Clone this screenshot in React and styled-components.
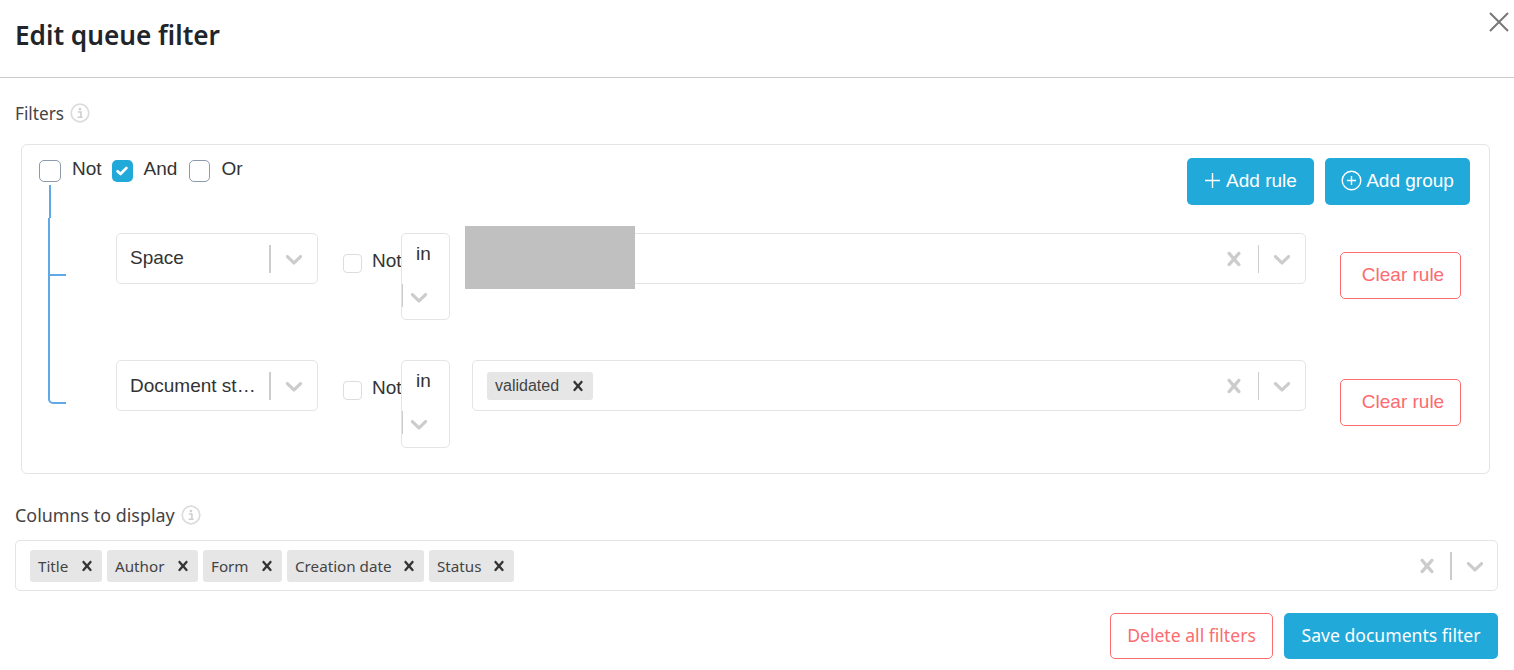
import React from "react";
import styled, { createGlobalStyle } from "styled-components";

const Global = createGlobalStyle`
  html, body { margin: 0; padding: 0; background: #fff; overflow: hidden; }
  * { box-sizing: border-box; }
`;
const BLUE = "#21a9da";
const RED = "#fb6b6f";
const UI = `"Noto Sans", "Open Sans", sans-serif`;
const ARIAL = `"Liberation Sans", Arial, sans-serif`;

const Dialog = styled.div`
  width: 1514px;
  height: 670px;
  background: #fff;
  font-family: ${UI};
  color: #333;
`;
const Header = styled.header`
  position: relative;
  height: 78px;
  padding: 0 15px 8px;
  display: flex;
  align-items: center;
  border-bottom: 1px solid #ccc;
`;
const Title = styled.h1`
  margin: 0;
  font-size: 26.2px;
  font-weight: 600;
  line-height: 32px;
  color: #212529;
`;
const Close = styled.button`
  position: absolute;
  top: 12px;
  right: 5px;
  width: 20px;
  height: 20px;
  padding: 0;
  border: 0;
  background: none;
  display: block;
`;
const Body = styled.main`
  padding: 0 16px 0 15px;
`;
const Label = styled.div`
  display: flex;
  align-items: center;
  gap: 6px;
  height: 24px;
  margin-top: ${(p) => p.$top}px;
  margin-bottom: ${(p) => p.$bottom}px;
  font-size: ${(p) => p.$size}px;
  color: #444;
`;
const Panel = styled.section`
  margin: 0 8px 0 6px;
  height: 330px;
  padding: 13px 19px 0 17px;
  border: 1px solid #e4e4e4;
  border-radius: 6px;
  display: grid;
  grid-template-columns: 77px 1fr auto;
  grid-template-rows: 27px 20px auto;
  font-family: ${ARIAL};
  font-size: 19px;
`;
const Conditions = styled.div`
  grid-column: 1 / 3;
  grid-row: 1;
  display: flex;
  align-items: flex-start;
  line-height: 22px;
`;
const GroupCheck = styled.span`
  width: ${(p) => p.$w || 21}px;
  height: 22px;
  margin-top: 2px;
  border-radius: 5px;
  border: ${(p) => (p.$on ? "0" : "1px solid #8c9aab")};
  background: ${(p) => (p.$on ? BLUE : "#fff")};
  display: flex;
  align-items: center;
  justify-content: center;
`;
const GroupText = styled.span`
  margin: 0 ${(p) => p.$after || 10}px 0 11px;
  color: #333;
`;
const Actions = styled.div`
  grid-column: 3;
  grid-row: 1 / 3;
  display: flex;
  gap: 11px;
`;
const Solid = styled.button`
  height: ${(p) => p.$h || 47}px;
  width: ${(p) => p.$w}px;
  border: 0;
  padding: 0 0 ${(p) => p.$lift || 0}px;
  border-radius: 5px;
  background: ${BLUE};
  color: #fff;
  font: inherit;
  display: flex;
  align-items: center;
  justify-content: center;
  gap: ${(p) => p.$gap || 0}px;
`;
const Spine = styled.svg`
  grid-column: 1;
  grid-row: 2 / 4;
  display: block;
`;
const Rules = styled.div`
  grid-column: 2 / 4;
  grid-row: 3;
  padding: 28px 9px 0 0;
  display: flex;
  flex-direction: column;
  gap: 40px;
`;
const Rule = styled.div`
  display: flex;
  align-items: flex-start;
  height: ${(p) => p.$h}px;
`;
const Select = styled.div`
  position: relative;
  display: flex;
  align-items: center;
  height: 51px;
  background: #fff;
  border: 1px solid #e4e4e4;
  border-radius: 5px;
  color: #333;
`;
const FieldSelect = styled(Select)`
  width: 202px;
  flex: none;
  padding-left: 13px;
`;
const FieldText = styled.span`
  flex: 1;
  min-width: 0;
  padding-bottom: ${(p) => p.$lift || 0}px;
  white-space: nowrap;
  overflow: hidden;
  text-overflow: ellipsis;
  margin-right: 10px;
`;
const Sep = styled.span`
  flex: none;
  width: ${(p) => p.$w || 1}px;
  height: 28px;
  background: #ccc;
`;
const Indicator = styled.span`
  flex: none;
  width: ${(p) => p.$w || 47}px;
  display: flex;
  justify-content: center;
  align-items: center;
  svg { display: block; }
`;
const NotBox = styled.span`
  flex: none;
  width: 19px;
  height: 19px;
  margin: 21px 0 0 25px;
  border: 1px solid #ddd;
  border-radius: 4px;
`;
const NotText = styled.span`
  flex: none;
  width: 29px;
  margin: 17px 0 0 10px;
  line-height: 22px;
  color: #333;
  white-space: nowrap;
  overflow: hidden;
`;
const OpSelect = styled.div`
  flex: none;
  width: 49px;
  height: 100%;
  border: 1px solid #e4e4e4;
  border-radius: 5px;
  display: grid;
  grid-template-rows: 50px 1fr;
  color: #333;
`;
const OpText = styled.span`
  padding: 9px 0 0 14px;
  line-height: 22px;
`;
const OpIndicators = styled.div`
  display: flex;
  align-items: flex-start;
  svg { display: block; margin: -1px 0 0 2px; }
`;
const OpSep = styled.span`
  width: 1px;
  height: 23px;
  background: #ccc;
`;
const ValueSelect = styled(Select)`
  flex: 1;
  min-width: 0;
  margin-left: 22px;
  padding-left: 14px;
`;
const Values = styled.div`
  flex: 1;
  display: flex;
  gap: 5px;
`;
const Redacted = styled.div`
  position: absolute;
  left: -8px;
  top: -8px;
  width: 170px;
  height: 63px;
  background: #c0c0c0;
`;
const ClearRule = styled.button`
  flex: none;
  width: 121px;
  height: 47px;
  margin: 19px 0 0 34px;
  padding: 0 0 1px 5px;
  background: #fff;
  border: 1px solid ${RED};
  border-radius: 5px;
  color: ${RED};
  font: inherit;
`;
const Chip = styled.span`
  display: flex;
  align-items: center;
  justify-content: space-between;
  width: ${(p) => p.$w}px;
  height: ${(p) => p.$h}px;
  padding: 0 5px 0 8px;
  background: #e6e6e6;
  border-radius: 3px;
  color: #444;
  font-size: ${(p) => p.$size}px;
  white-space: nowrap;
  svg { display: block; flex: none; }
`;
const ColumnsSelect = styled(Select)`
  padding-left: 14px;
`;
const Footer = styled.footer`
  margin-top: 22px;
  display: flex;
  justify-content: flex-end;
  gap: 11px;
  font-size: 17.6px;
`;
const Outline = styled.button`
  width: 163px;
  height: 46px;
  padding: 0 0 2px;
  background: #fff;
  border: 1px solid ${RED};
  border-radius: 5px;
  color: ${RED};
  font: inherit;
`;

const Chevron = ({ size = 28 }) => (
  <svg width={size} height={size} viewBox="0 0 20 20" fill="#ccc">
    <path d="M4.516 7.548c0.436-0.446 1.043-0.481 1.576 0l3.908 3.747 3.908-3.747c0.533-0.481 1.141-0.446 1.574 0 0.436 0.445 0.408 1.197 0 1.615-0.406 0.418-4.695 4.502-4.695 4.502-0.217 0.223-0.502 0.335-0.787 0.335s-0.57-0.112-0.789-0.335c0 0-4.287-4.084-4.695-4.502s-0.436-1.17 0-1.615z" />
  </svg>
);
const CROSS = "M14.348 14.849c-0.469 0.469-1.229 0.469-1.697 0l-2.651-3.030-2.651 3.029c-0.469 0.469-1.229 0.469-1.697 0-0.469-0.469-0.469-1.229 0-1.697l2.758-3.15-2.759-3.152c-0.469-0.469-0.469-1.228 0-1.697s1.228-0.469 1.697 0l2.652 3.031 2.651-3.031c0.469-0.469 1.228-0.469 1.697 0s0.469 1.229 0 1.697l-2.758 3.152 2.758 3.15c0.469 0.469 0.469 1.229 0 1.698z";
const Cross = ({ size = 28, color = "#ccc" }) => (
  <svg width={size} height={size} viewBox="0 0 20 20" fill={color}>
    <path d={CROSS} />
  </svg>
);
const Info = () => (
  <svg width="20" height="20" viewBox="0 0 20 20" fill="none">
    <circle cx="10" cy="10" r="8.8" stroke="#dcdcdc" strokeWidth="1.7" />
    <circle cx="10" cy="6.1" r="1.3" fill="#cfcfcf" />
    <path d="M7.9 9h3v5.2M7.6 14.3h5" stroke="#cfcfcf" strokeWidth="1.6" />
  </svg>
);
const Check = () => (
  <svg width="12" height="10" viewBox="0 0 12 10" fill="none">
    <path d="M1.6 5.2 4.5 8 10.4 2" stroke="#fff" strokeWidth="2.6" strokeLinecap="round" strokeLinejoin="round" />
  </svg>
);

const RuleRow = ({ h, field, lift, children }) => (
  <Rule $h={h}>
    <FieldSelect>
      <FieldText $lift={lift}>{field}</FieldText>
      <Sep $w={2} />
      <Indicator $w={46}>
        <Chevron />
      </Indicator>
    </FieldSelect>
    <NotBox />
    <NotText>Not</NotText>
    <OpSelect>
      <OpText>in</OpText>
      <OpIndicators>
        <OpSep />
        <Chevron />
      </OpIndicators>
    </OpSelect>
    {children}
    <ClearRule>Clear rule</ClearRule>
  </Rule>
);

const ValueEnd = ({ sep = 1, clear = 48, open = 46 }) => (
  <>
    <Indicator $w={clear}>
      <Cross />
    </Indicator>
    <Sep $w={sep} />
    <Indicator $w={open}>
      <Chevron />
    </Indicator>
  </>
);

const columns = [
  ["Title", 72],
  ["Author", 91],
  ["Form", 79],
  ["Creation date", 137],
  ["Status", 85],
];

export default function App() {
  return (
    <Dialog>
      <Global />
      <Header>
        <Title>Edit queue filter</Title>
        <Close aria-label="Close">
          <svg width="20" height="20" viewBox="0 0 20 20" fill="none">
            <path d="M1 1 19 19M19 1 1 19" stroke="#777" strokeWidth="2" />
          </svg>
        </Close>
      </Header>
      <Body>
        <Label $top={23} $bottom={19} $size={17.2}>
          <span>Filters</span>
          <Info />
        </Label>
        <Panel>
          <Conditions>
            <GroupCheck $w={22} />
            <GroupText>Not</GroupText>
            <GroupCheck $on>
              <Check />
            </GroupCheck>
            <GroupText $after={12}>And</GroupText>
            <GroupCheck />
            <GroupText>Or</GroupText>
          </Conditions>
          <Actions>
            <Solid $w={127} $gap={5} $lift={2}>
              <svg width="17" height="17" viewBox="0 0 17 17" fill="none">
                <path d="M8.5 1v15M1 8.5h15" stroke="#fff" strokeWidth="1.4" />
              </svg>
              Add rule
            </Solid>
            <Solid $w={145} $gap={4} $lift={2}>
              <svg width="21" height="21" viewBox="0 0 21 21" fill="none">
                <circle cx="10.5" cy="10.5" r="9.3" stroke="#fff" strokeWidth="1.4" />
                <path d="M10.5 6v9M6 10.5h9" stroke="#fff" strokeWidth="1.4" />
              </svg>
              Add group
            </Solid>
          </Actions>
          <Spine width="30" height="219" viewBox="0 0 30 219" fill="none">
            <path d="M11 0V33M10 33V214a4 4 0 0 0 4 4H27M10 90H27" stroke="#5ea9e6" strokeWidth="2" />
          </Spine>
          <Rules>
            <RuleRow h={87} field="Space" lift={2}>
              <ValueSelect>
                <Values />
                <ValueEnd />
                <Redacted />
              </ValueSelect>
            </RuleRow>
            <RuleRow h={88} field="Document status">
              <ValueSelect>
                <Values>
                  <Chip $w={106} $h={28} $size={16}>
                    validated
                    <Cross size={20} color="#333" />
                  </Chip>
                </Values>
                <ValueEnd />
              </ValueSelect>
            </RuleRow>
          </Rules>
        </Panel>
        <Label $top={29} $bottom={13} $size={17.9}>
          <span>Columns to display</span>
          <Info />
        </Label>
        <ColumnsSelect>
          <Values>
            {columns.map(([name, w]) => (
              <Chip key={name} $w={w} $h={32} $size={15.2}>
                {name}
                <Cross size={20} color="#333" />
              </Chip>
            ))}
          </Values>
          <ValueEnd sep={2} clear={47} open={45} />
        </ColumnsSelect>
        <Footer>
          <Outline>Delete all filters</Outline>
          <Solid $w={214} $h={46} $lift={2}>Save documents filter</Solid>
        </Footer>
      </Body>
    </Dialog>
  );
}
